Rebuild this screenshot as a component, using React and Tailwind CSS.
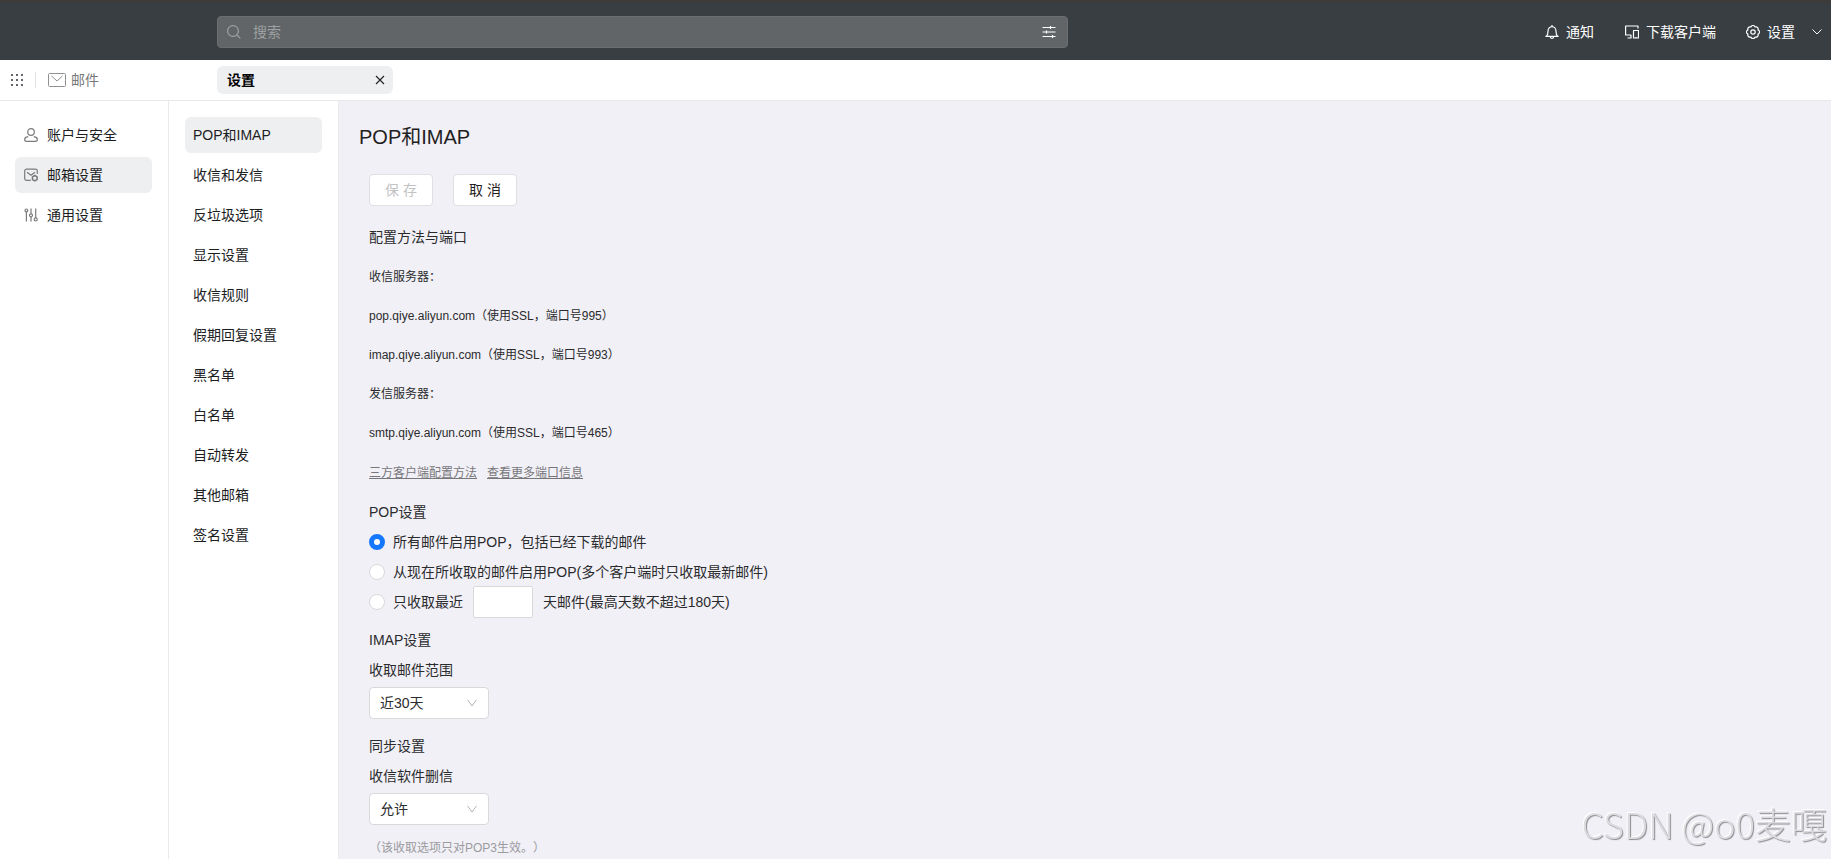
import React, { useState } from "react";

const ICON_PATHS = {
  search: (
    <>
      <circle cx="6" cy="6" r="5.4" />
      <path d="M10 10l3.3 3.3" />
    </>
  ),
  filter: (
    <path d="M0.5 2.5h13M0.5 7h13M0.5 11.5h13M8.5 1v3M4.5 5.5v3M10.5 10v3" />
  ),
  bell: (
    <path d="M7 0v1.2M0.4 11.4h13.2M1.4 11.4c1.4-1.4 1.6-2.6 1.6-5.2a4 4.6 0 0 1 8 0c0 2.6 0.2 3.8 1.6 5.2M5.2 11.6a1.8 1.8 0 0 0 3.6 0" />
  ),
  devices: (
    <>
      <path d="M13 3.5v-2.5h-12.4v9h5.4v3h-3.5" />
      <path d="M8.5 5.5h5v7.5h-5zM10.5 12.6h1.2" />
    </>
  ),
  gear: (
    <>
      <path d="M12 4.9A2.2 2.2 0 0 1 12 9.1A2.2 2.2 0 0 1 9.1 12A2.2 2.2 0 0 1 4.9 12A2.2 2.2 0 0 1 2 9.1A2.2 2.2 0 0 1 2 4.9A2.2 2.2 0 0 1 4.9 2A2.2 2.2 0 0 1 9.1 2A2.2 2.2 0 0 1 12 4.9z" />
      <circle cx="7" cy="7" r="2.2" />
    </>
  ),
  user: (
    <>
      <circle cx="7" cy="4" r="3.3" />
      <path d="M4.2 8.6C2 8.9 0.7 9.9 0.7 11.4c0 1.2 0.8 1.9 2 1.9h8.6c1.2 0 2-0.7 2-1.9 0-1.5-1.3-2.5-3.5-2.8" />
    </>
  ),
  mailSetting: (
    <>
      <path d="M6.8 12.4H2.6A1.9 1.9 0 0 1 0.7 10.5V3A1.9 1.9 0 0 1 2.6 1.1h8.8a1.9 1.9 0 0 1 1.9 1.9v3M3 4.2L7 7.2l4-3" />
      <path d="M10.8 7.5l2.3 1.35v2.7l-2.3 1.35-2.3-1.35v-2.7z" strokeWidth="1.6" />
    </>
  ),
  sliders: (
    <>
      <path d="M2.4 4v9.5M7 0.5v5.2M7 9v4.5M11.7 0.5v9.3" />
      <circle cx="2.4" cy="2.4" r="1.4" />
      <circle cx="7" cy="7.3" r="1.5" />
      <circle cx="11.7" cy="11.4" r="1.5" />
    </>
  ),
};

const Icon = ({ name, className = "" }) => (
  <svg
    viewBox="0 0 14 14"
    fill="none"
    stroke="currentColor"
    strokeWidth="1.2"
    strokeLinejoin="round"
    className={`size-3.5 shrink-0 ${className}`}
  >
    {ICON_PATHS[name]}
  </svg>
);

const Chevron = ({ className = "" }) => (
  <svg viewBox="0 0 10 8" fill="none" stroke="currentColor" className={className}>
    <path d="M0.5 0.8L5 7l4.5-6.2" />
  </svg>
);

const mainMenu = [
  { label: "账户与安全", icon: "user" },
  { label: "邮箱设置", icon: "mailSetting" },
  { label: "通用设置", icon: "sliders" },
];

const subMenu = [
  "POP和IMAP",
  "收信和发信",
  "反垃圾选项",
  "显示设置",
  "收信规则",
  "假期回复设置",
  "黑名单",
  "白名单",
  "自动转发",
  "其他邮箱",
  "签名设置",
];

const servers = [
  "收信服务器：",
  "pop.qiye.aliyun.com（使用SSL，端口号995）",
  "imap.qiye.aliyun.com（使用SSL，端口号993）",
  "发信服务器：",
  "smtp.qiye.aliyun.com（使用SSL，端口号465）",
];

const Header = () => (
  <header className="flex h-15 shrink-0 items-center justify-between border-t-3 border-[#3c3b3a] bg-[#393e42] pr-[9px] pl-[217px] text-sm text-white">
    <label className="flex h-8 w-[851px] items-center rounded-sm border border-[#6b6f71] bg-[#616567] pr-[11px] pl-[9px] text-[#9da0a2]">
      <Icon name="search" />
      <input
        type="text"
        aria-label="搜索"
        placeholder="搜索"
        className="ml-3 min-w-0 grow outline-none placeholder:text-[#9da0a2]"
      />
      <button aria-label="筛选" className="text-white">
        <Icon name="filter" />
      </button>
    </label>
    <nav className="flex items-center">
      <button className="flex items-center gap-[7px]">
        <Icon name="bell" />
        通知
      </button>
      <button className="ml-[31px] flex items-center gap-[7px]">
        <Icon name="devices" />
        下载客户端
      </button>
      <button className="ml-[30px] flex items-center gap-[7px]">
        <Icon name="gear" />
        设置
      </button>
      <button aria-label="更多" className="ml-[17px]">
        <svg viewBox="0 0 10 8" fill="none" stroke="currentColor" className="h-2 w-2.5">
          <path d="M0.5 1.5L5 6l4.5-4.5" />
        </svg>
      </button>
    </nav>
  </header>
);

const TabBar = () => (
  <div className="flex h-[41px] shrink-0 items-center border-b border-[#e7e8ea] bg-white text-sm">
    <div className="flex w-[217px] items-center pl-[11px]">
      <button aria-label="应用">
        <svg viewBox="0 0 12 12" className="size-3 fill-[#62666a]">
          {[0, 5, 10].map((y) =>
            [0, 5, 10].map((x) => <rect key={`${x}-${y}`} x={x} y={y} width="2" height="2" />)
          )}
        </svg>
      </button>
      <div className="ml-3 h-4 w-px bg-[#e4e5e7]"></div>
      <button className="ml-3 flex items-center gap-[5px] text-[#77787a]">
        <svg viewBox="0 0 18 14" fill="none" stroke="#8f9193" className="h-3.5 w-4.5">
          <rect x="0.5" y="0.5" width="17" height="13" rx="1" />
          <path d="M3.5 3l5.5 5 5.5-5" />
        </svg>
        邮件
      </button>
    </div>
    <div className="flex h-7 w-44 items-center justify-between rounded-md bg-[#eeeff1] pr-2 pl-2.5">
      <span className="font-bold text-black">设置</span>
      <button aria-label="关闭">
        <svg viewBox="0 0 10 10" stroke="#222" strokeWidth="1.1" className="size-2.5">
          <path d="M1 1l8 8M9 1l-8 8" />
        </svg>
      </button>
    </div>
  </div>
);

const MenuItem = ({ label, icon, active, onClick }) => (
  <button
    onClick={onClick}
    className={`flex h-9 w-full items-center rounded-md text-left text-sm text-[#1c1d1f] ${
      icon ? "gap-[9px] pl-[9px]" : "pl-2"
    } ${active ? "bg-[#eeeff1]" : ""}`}
  >
    {icon && <Icon name={icon} className="text-[#7a7b7d]" />}
    {label}
  </button>
);

const Radio = ({ id, checked, onChange }) => (
  <input
    type="radio"
    id={id}
    name="pop"
    checked={checked}
    onChange={onChange}
    className="size-4 shrink-0 appearance-none rounded-full border border-[#d9d9d9] bg-white checked:border-5 checked:border-[#1677ff]"
  />
);

const Select = ({ id, options }) => (
  <div className="relative w-30">
    <select
      id={id}
      className="h-8 w-full appearance-none rounded-sm border border-[#d9d9d9] bg-white pl-2.5 text-sm outline-none"
    >
      {options.map((option) => (
        <option key={option}>{option}</option>
      ))}
    </select>
    <Chevron className="pointer-events-none absolute top-3 right-3 h-2 w-2.5 text-[#b5b5b7]" />
  </div>
);

const PopImap = () => {
  const [popMode, setPopMode] = useState("all");
  const [days, setDays] = useState("");

  return (
    <main className="min-w-0 grow overflow-hidden bg-[#f1f0f6] pt-5 pl-5 text-sm text-[#2a2b2d]">
      <h1 className="text-xl/8 text-[#1f2022]">POP和IMAP</h1>

      <div className="pt-[21px] pl-2.5">
        <div className="flex gap-5">
          <button disabled className="h-8 w-16 rounded-sm border border-[#e0e0e2] bg-white text-[#c3c3c4]">
            保 存
          </button>
          <button className="h-8 w-16 rounded-sm border border-[#e0e0e2] bg-white text-[#1f2022]">
            取 消
          </button>
        </div>

        <h2 className="mt-5 leading-[22px]">配置方法与端口</h2>
        <div className="mt-[19px] flex flex-col gap-[19px] text-xs/5">
          {servers.map((line) => (
            <p key={line}>{line}</p>
          ))}
        </div>
        <div className="mt-5 flex gap-2.5 text-xs/5 text-[#77777b] underline">
          <a href="#client">三方客户端配置方法</a>
          <a href="#ports">查看更多端口信息</a>
        </div>

        <h2 className="mt-[18px] leading-[22px]">POP设置</h2>
        <div className="mt-1 flex flex-col">
          <div className="flex h-[30px] items-center gap-2">
            <Radio id="pop-all" checked={popMode === "all"} onChange={() => setPopMode("all")} />
            <label htmlFor="pop-all">所有邮件启用POP，包括已经下载的邮件</label>
          </div>
          <div className="flex h-[30px] items-center gap-2">
            <Radio id="pop-new" checked={popMode === "new"} onChange={() => setPopMode("new")} />
            <label htmlFor="pop-new">从现在所收取的邮件启用POP(多个客户端时只收取最新邮件)</label>
          </div>
          <div className="flex h-[30px] items-center">
            <Radio id="pop-recent" checked={popMode === "recent"} onChange={() => setPopMode("recent")} />
            <label htmlFor="pop-recent" className="ml-2">
              只收取最近
            </label>
            <input
              type="text"
              aria-label="天数"
              value={days}
              onChange={(e) => setDays(e.target.value)}
              className="mx-2.5 h-8 w-15 rounded-xs border border-[#d9d9d9] bg-white px-2 outline-none"
            />
            <span>天邮件(最高天数不超过180天)</span>
          </div>
        </div>

        <h2 className="mt-3 leading-[22px]">IMAP设置</h2>
        <label htmlFor="imap-range" className="mt-2 mb-1.5 block leading-[22px]">
          收取邮件范围
        </label>
        <Select id="imap-range" options={["近30天", "全部"]} />

        <h2 className="mt-4 leading-[22px]">同步设置</h2>
        <label htmlFor="sync-delete" className="mt-2 mb-1.5 block leading-[22px]">
          收信软件删信
        </label>
        <Select id="sync-delete" options={["允许", "禁止"]} />
        <p className="mt-[13px] text-xs/5 text-[#9b9b9f] [text-spacing-trim:space-all]">
          （该收取选项只对POP3生效。）
        </p>
      </div>
    </main>
  );
};

const App = () => {
  const [section, setSection] = useState("邮箱设置");
  const [page, setPage] = useState("POP和IMAP");

  return (
    <div className="flex h-screen flex-col overflow-hidden bg-white font-['Liberation_Sans','Noto_Sans_CJK_SC',sans-serif]">
      <Header />
      <TabBar />
      <div className="flex min-h-0 grow">
        <aside className="flex w-[169px] shrink-0 flex-col gap-1 border-r border-[#e9eaec] pt-4 pr-4 pl-[15px]">
          {mainMenu.map((item) => (
            <MenuItem
              key={item.label}
              {...item}
              active={section === item.label}
              onClick={() => setSection(item.label)}
            />
          ))}
        </aside>
        <aside className="flex w-[170px] shrink-0 flex-col gap-1 border-r border-[#e9eaec] px-4 pt-4">
          {subMenu.map((label) => (
            <MenuItem key={label} label={label} active={page === label} onClick={() => setPage(label)} />
          ))}
        </aside>
        <PopImap />
      </div>

      <div className="pointer-events-none fixed right-1 bottom-3 font-['Noto_Sans_CJK_SC',sans-serif] text-4xl/12 font-light text-[#dcdce0] [text-shadow:1px_1px_1px_#8c8c90,-1px_-1px_0_#fff]">
        CSDN @o0麦嘎
      </div>
    </div>
  );
};

export default App;
